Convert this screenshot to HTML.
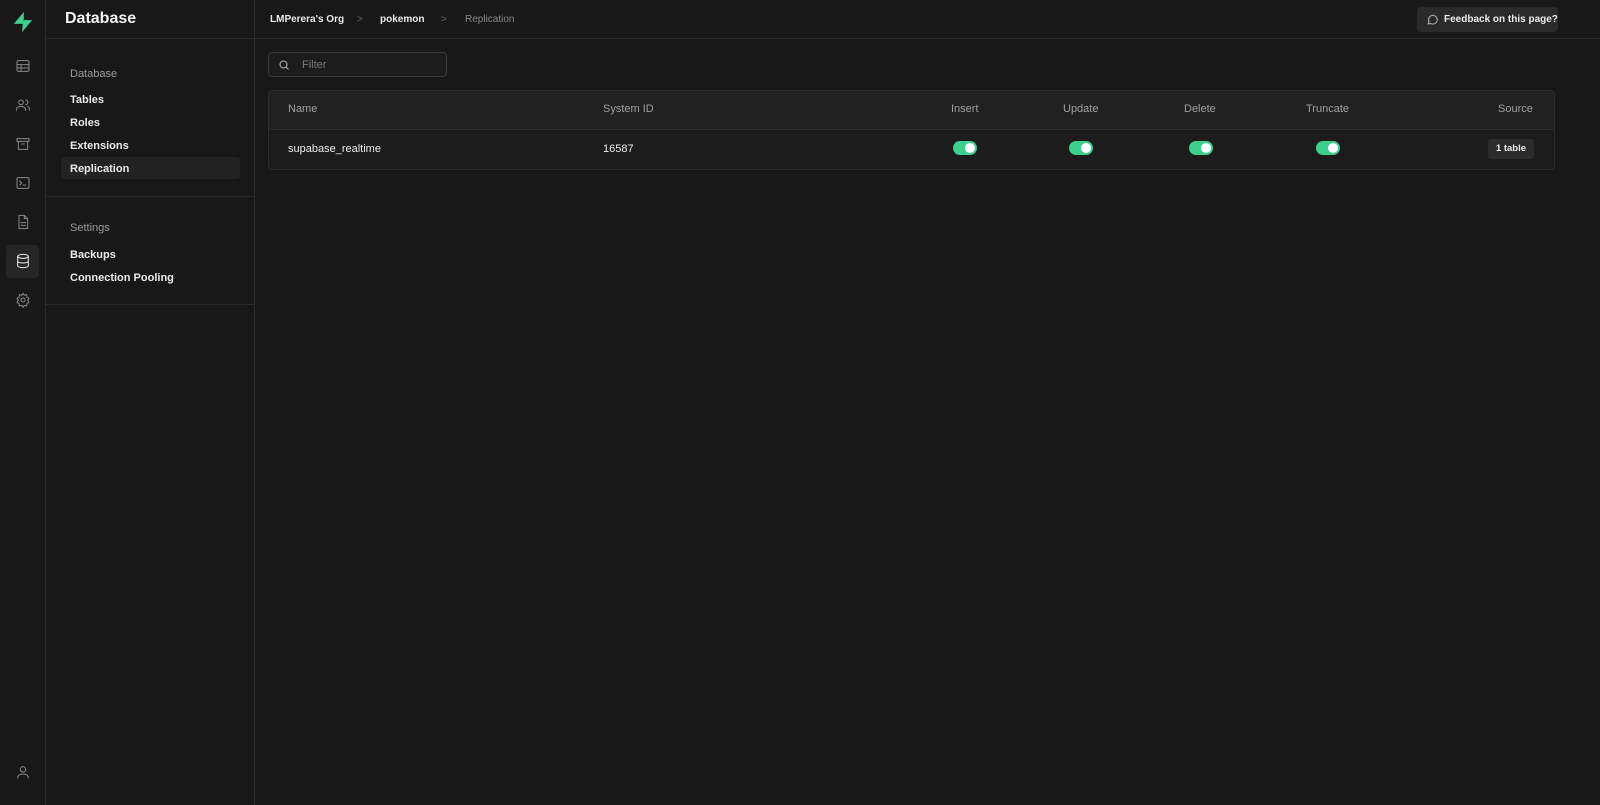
<!DOCTYPE html>
<html><head><meta charset="utf-8"><style>
*{box-sizing:border-box;margin:0;padding:0}
body{width:1600px;height:805px;background:#181818;font-family:"Liberation Sans",sans-serif;color:#ededed;position:relative;overflow:hidden;font-size:11px}
.rail{position:absolute;left:0;top:0;width:46px;height:805px;background:#181818;border-right:1px solid #2a2a2a}
.rail svg{position:absolute;left:15px;width:16px;height:16px;fill:none;stroke:#8a8a8a;stroke-width:1.5;stroke-linecap:round;stroke-linejoin:round}
.side{position:absolute;left:46px;top:0;width:209px;height:805px;border-right:1px solid #2a2a2a}
.side h1{position:absolute;left:19px;top:10px;font-size:16px;font-weight:bold;color:#f5f5f5}
.hr{position:absolute;left:0;width:208px;height:1px;background:#2a2a2a}
.lbl{position:absolute;left:24px;color:#9a9a9a;font-size:11px}
.it{position:absolute;left:24px;color:#eaeaea;font-size:11px;font-weight:bold}
.top{position:absolute;left:255px;top:0;right:0;height:39px;border-bottom:1px solid #2a2a2a}
.bc{position:absolute;top:14px;font-size:10px;font-weight:bold}
.tog{position:absolute;top:141px;width:24px;height:14px;border-radius:7px;background:#3ecf8e}
.tog:after{content:"";position:absolute;right:2px;top:2px;width:10px;height:10px;border-radius:50%;background:#fff}
.th{position:absolute;top:103px;color:#a0a0a0;font-size:11px}
</style></head><body>
<div class="rail">
<svg viewBox="0 0 24 24" style="top:11px;width:22px;height:22px;left:12px;stroke:none"><path d="M13 1 L2 14 H12 Z" fill="#3ecf8e"/><path d="M11 23 L22 10 H12 Z" fill="#3ecf8e"/><path d="M12 14 L13 1 L13 10 Z" fill="#24b47e"/></svg>
<svg viewBox="0 0 24 24" style="top:58px"><rect x="3" y="4" width="18" height="16" rx="2"/><path d="M3 10h18M3 15h18M9 10v10"/></svg>
<svg viewBox="0 0 24 24" style="top:97px"><circle cx="9" cy="8" r="3.5"/><path d="M2 20c0-4 3-6 7-6s7 2 7 6M16 4.5a3.5 3.5 0 0 1 0 7M19 14c2 1 3 3 3 6"/></svg>
<svg viewBox="0 0 24 24" style="top:136px"><rect x="3" y="4" width="18" height="4"/><path d="M5 8v12h14V8M10 12h4"/></svg>
<svg viewBox="0 0 24 24" style="top:175px"><rect x="3" y="4" width="18" height="16" rx="2"/><path d="M7 9l3 3-3 3M12 15h4"/></svg>
<svg viewBox="0 0 24 24" style="top:214px"><path d="M6 2h8l5 5v15H6z M14 2v5h5M9 13h7M9 17h7"/></svg>
<div style="position:absolute;left:6px;top:245px;width:33px;height:33px;background:#262626;border-radius:4px"></div>
<svg viewBox="0 0 24 24" style="top:253px;stroke:#eaeaea"><ellipse cx="12" cy="5" rx="8" ry="3"/><path d="M4 5v14c0 1.7 3.6 3 8 3s8-1.3 8-3V5M4 12c0 1.7 3.6 3 8 3s8-1.3 8-3"/></svg>
<svg viewBox="0 0 24 24" style="top:292px"><circle cx="12" cy="12" r="3"/><path d="M12 2l2 3 3.5-1 .5 3.5 3 2-2 3 2 3-3 2-.5 3.5-3.5-1-2 3-2-3-3.5 1-.5-3.5-3-2 2-3-2-3 3-2 .5-3.5 3.5 1z"/></svg>
<svg viewBox="0 0 24 24" style="top:764px"><circle cx="12" cy="8" r="4"/><path d="M4 21c0-4 3.5-6 8-6s8 2 8 6"/></svg>
</div>
<div class="side">
<h1>Database</h1>
<div class="hr" style="top:38px"></div>
<div class="lbl" style="top:68px">Database</div>
<div class="it" style="top:94px">Tables</div>
<div class="it" style="top:117px">Roles</div>
<div class="it" style="top:140px">Extensions</div>
<div style="position:absolute;left:15px;top:157px;width:179px;height:22px;background:#232323;border-radius:3px"></div>
<div class="it" style="top:163px">Replication</div>
<div class="hr" style="top:196px"></div>
<div class="lbl" style="top:222px">Settings</div>
<div class="it" style="top:249px">Backups</div>
<div class="it" style="top:272px">Connection Pooling</div>
<div class="hr" style="top:304px"></div>
</div>
<div class="top">
<div class="bc" style="left:15px;color:#eaeaea">LMPerera's Org</div>
<div class="bc" style="left:102px;color:#666;font-weight:normal">&gt;</div>
<div class="bc" style="left:125px;color:#eaeaea">pokemon</div>
<div class="bc" style="left:186px;color:#666;font-weight:normal">&gt;</div>
<div class="bc" style="left:210px;color:#8a8a8a;font-weight:normal">Replication</div>
<div style="position:absolute;left:1162px;top:7px;width:141px;height:25px;background:#2a2a2a;border-radius:4px">
<svg viewBox="0 0 24 24" style="position:absolute;left:9px;top:6px;width:13px;height:13px;fill:none;stroke:#aaa;stroke-width:2"><path d="M4 20l1.5-4A8 8 0 1 1 9 19.5z"/></svg>
<span style="position:absolute;left:27px;top:7px;font-size:10px;font-weight:bold">Feedback on this page?</span></div>
</div>
<div style="position:absolute;left:268px;top:52px;width:179px;height:25px;border:1px solid #3a3a3a;border-radius:4px;background:#1c1c1c">
<svg viewBox="0 0 24 24" style="position:absolute;left:9px;top:6px;width:12px;height:12px;fill:none;stroke:#aaa;stroke-width:2.2"><circle cx="11" cy="11" r="7"/><path d="M16 16l5 5"/></svg>
<span style="position:absolute;left:33px;top:6px;color:#7a7a7a;font-size:11px">Filter</span></div>
<div style="position:absolute;left:268px;top:90px;width:1287px;height:80px;border:1px solid #2c2c2c;border-radius:4px;background:#1c1c1c;overflow:hidden">
<div style="height:39px;background:#212121;border-bottom:1px solid #2c2c2c"></div></div>
<div class="th" style="left:288px">Name</div>
<div class="th" style="left:603px">System ID</div>
<div class="th" style="left:951px">Insert</div>
<div class="th" style="left:1063px">Update</div>
<div class="th" style="left:1184px">Delete</div>
<div class="th" style="left:1306px">Truncate</div>
<div class="th" style="left:1498px">Source</div>
<div style="position:absolute;left:288px;top:143px;font-size:11px">supabase_realtime</div>
<div style="position:absolute;left:603px;top:143px;font-size:11px">16587</div>
<div class="tog" style="left:953px"></div>
<div class="tog" style="left:1069px"></div>
<div class="tog" style="left:1189px"></div>
<div class="tog" style="left:1316px"></div>
<div style="position:absolute;left:1488px;top:139px;width:46px;height:20px;background:#2c2c2c;border-radius:3px;font-size:9.5px;font-weight:bold;text-align:center;line-height:20px">1 table</div>
</body></html>
